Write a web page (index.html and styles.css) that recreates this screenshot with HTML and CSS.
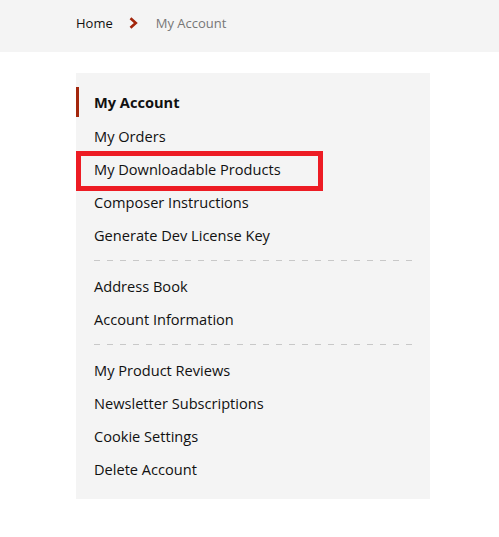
FILE: index.html
```html
<!DOCTYPE html>
<html lang="en">
<head>
<meta charset="utf-8">
<title>My Account</title>
<link rel="stylesheet" href="styles.css">
</head>
<body>
<nav class="breadcrumbs">
  <a class="crumb crumb-home" href="#">Home</a>
  <svg class="crumb-sep" width="9" height="12" viewBox="0 0 9 12" aria-hidden="true"><polyline points="1.5,1.2 6.8,6 1.5,10.8" fill="none" stroke="#a3260c" stroke-width="2.6" stroke-linejoin="miter"/></svg>
  <span class="crumb crumb-current">My Account</span>
</nav>
<main class="page">
  <aside class="sidebar">
    <ul class="nav-list">
      <li class="nav-item active"><span>My Account</span></li>
      <li class="nav-item"><a href="#">My Orders</a></li>
      <li class="nav-item highlighted"><a href="#">My Downloadable Products</a></li>
      <li class="nav-item"><a href="#">Composer Instructions</a></li>
      <li class="nav-item"><a href="#">Generate Dev License Key</a></li>
      <li class="nav-sep"></li>
      <li class="nav-item"><a href="#">Address Book</a></li>
      <li class="nav-item"><a href="#">Account Information</a></li>
      <li class="nav-sep"></li>
      <li class="nav-item"><a href="#">My Product Reviews</a></li>
      <li class="nav-item"><a href="#">Newsletter Subscriptions</a></li>
      <li class="nav-item"><a href="#">Cookie Settings</a></li>
      <li class="nav-item"><a href="#">Delete Account</a></li>
    </ul>
  </aside>
</main>
</body>
</html>
```
FILE: styles.css
```css
html, body {
  margin: 0;
  padding: 0;
  background: #ffffff;
}
body {
  font-family: "Open Sans", "Liberation Sans", sans-serif;
  color: #111111;
}
.breadcrumbs {
  height: 52px;
  background: #f4f4f4;
  display: flex;
  align-items: center;
  padding: 0 0 6px 76px;
  box-sizing: border-box;
  font-size: 13px;
}
.crumb {
  text-decoration: none;
}
.crumb-home {
  color: #111111;
  font-weight: 500;
}
.crumb-sep {
  margin: 0 18px 0 16px;
}
.crumb-current {
  color: #777777;
}
.page {
  padding: 21px 0 0 76px;
}
.sidebar {
  width: 354px;
  background: #f4f4f4;
  padding: 13px 0 13px 0;
}
.nav-list {
  list-style: none;
  margin: 0;
  padding: 0;
}
.nav-item {
  height: 33px;
  line-height: 33px;
  font-size: 14.6px;
  position: relative;
}
.nav-item a,
.nav-item span {
  display: block;
  padding-left: 18px;
  color: #111111;
  text-decoration: none;
}
.nav-item.active span {
  font-weight: 700;
  border-left: 3px solid #a3260c;
  padding-left: 15px;
  line-height: 30px;
  margin-top: 1px;
}
.nav-item.highlighted::after {
  content: "";
  position: absolute;
  left: 0;
  top: -2px;
  width: 247px;
  height: 40px;
  border: 5px solid #ed1c24;
  box-sizing: border-box;
  pointer-events: none;
}
.nav-sep {
  height: 1px;
  margin: 8px 18px 9px 18px;
  background: repeating-linear-gradient(to right, #c8c8c8 0, #c8c8c8 6px, transparent 6px, transparent 13px);
}
```
